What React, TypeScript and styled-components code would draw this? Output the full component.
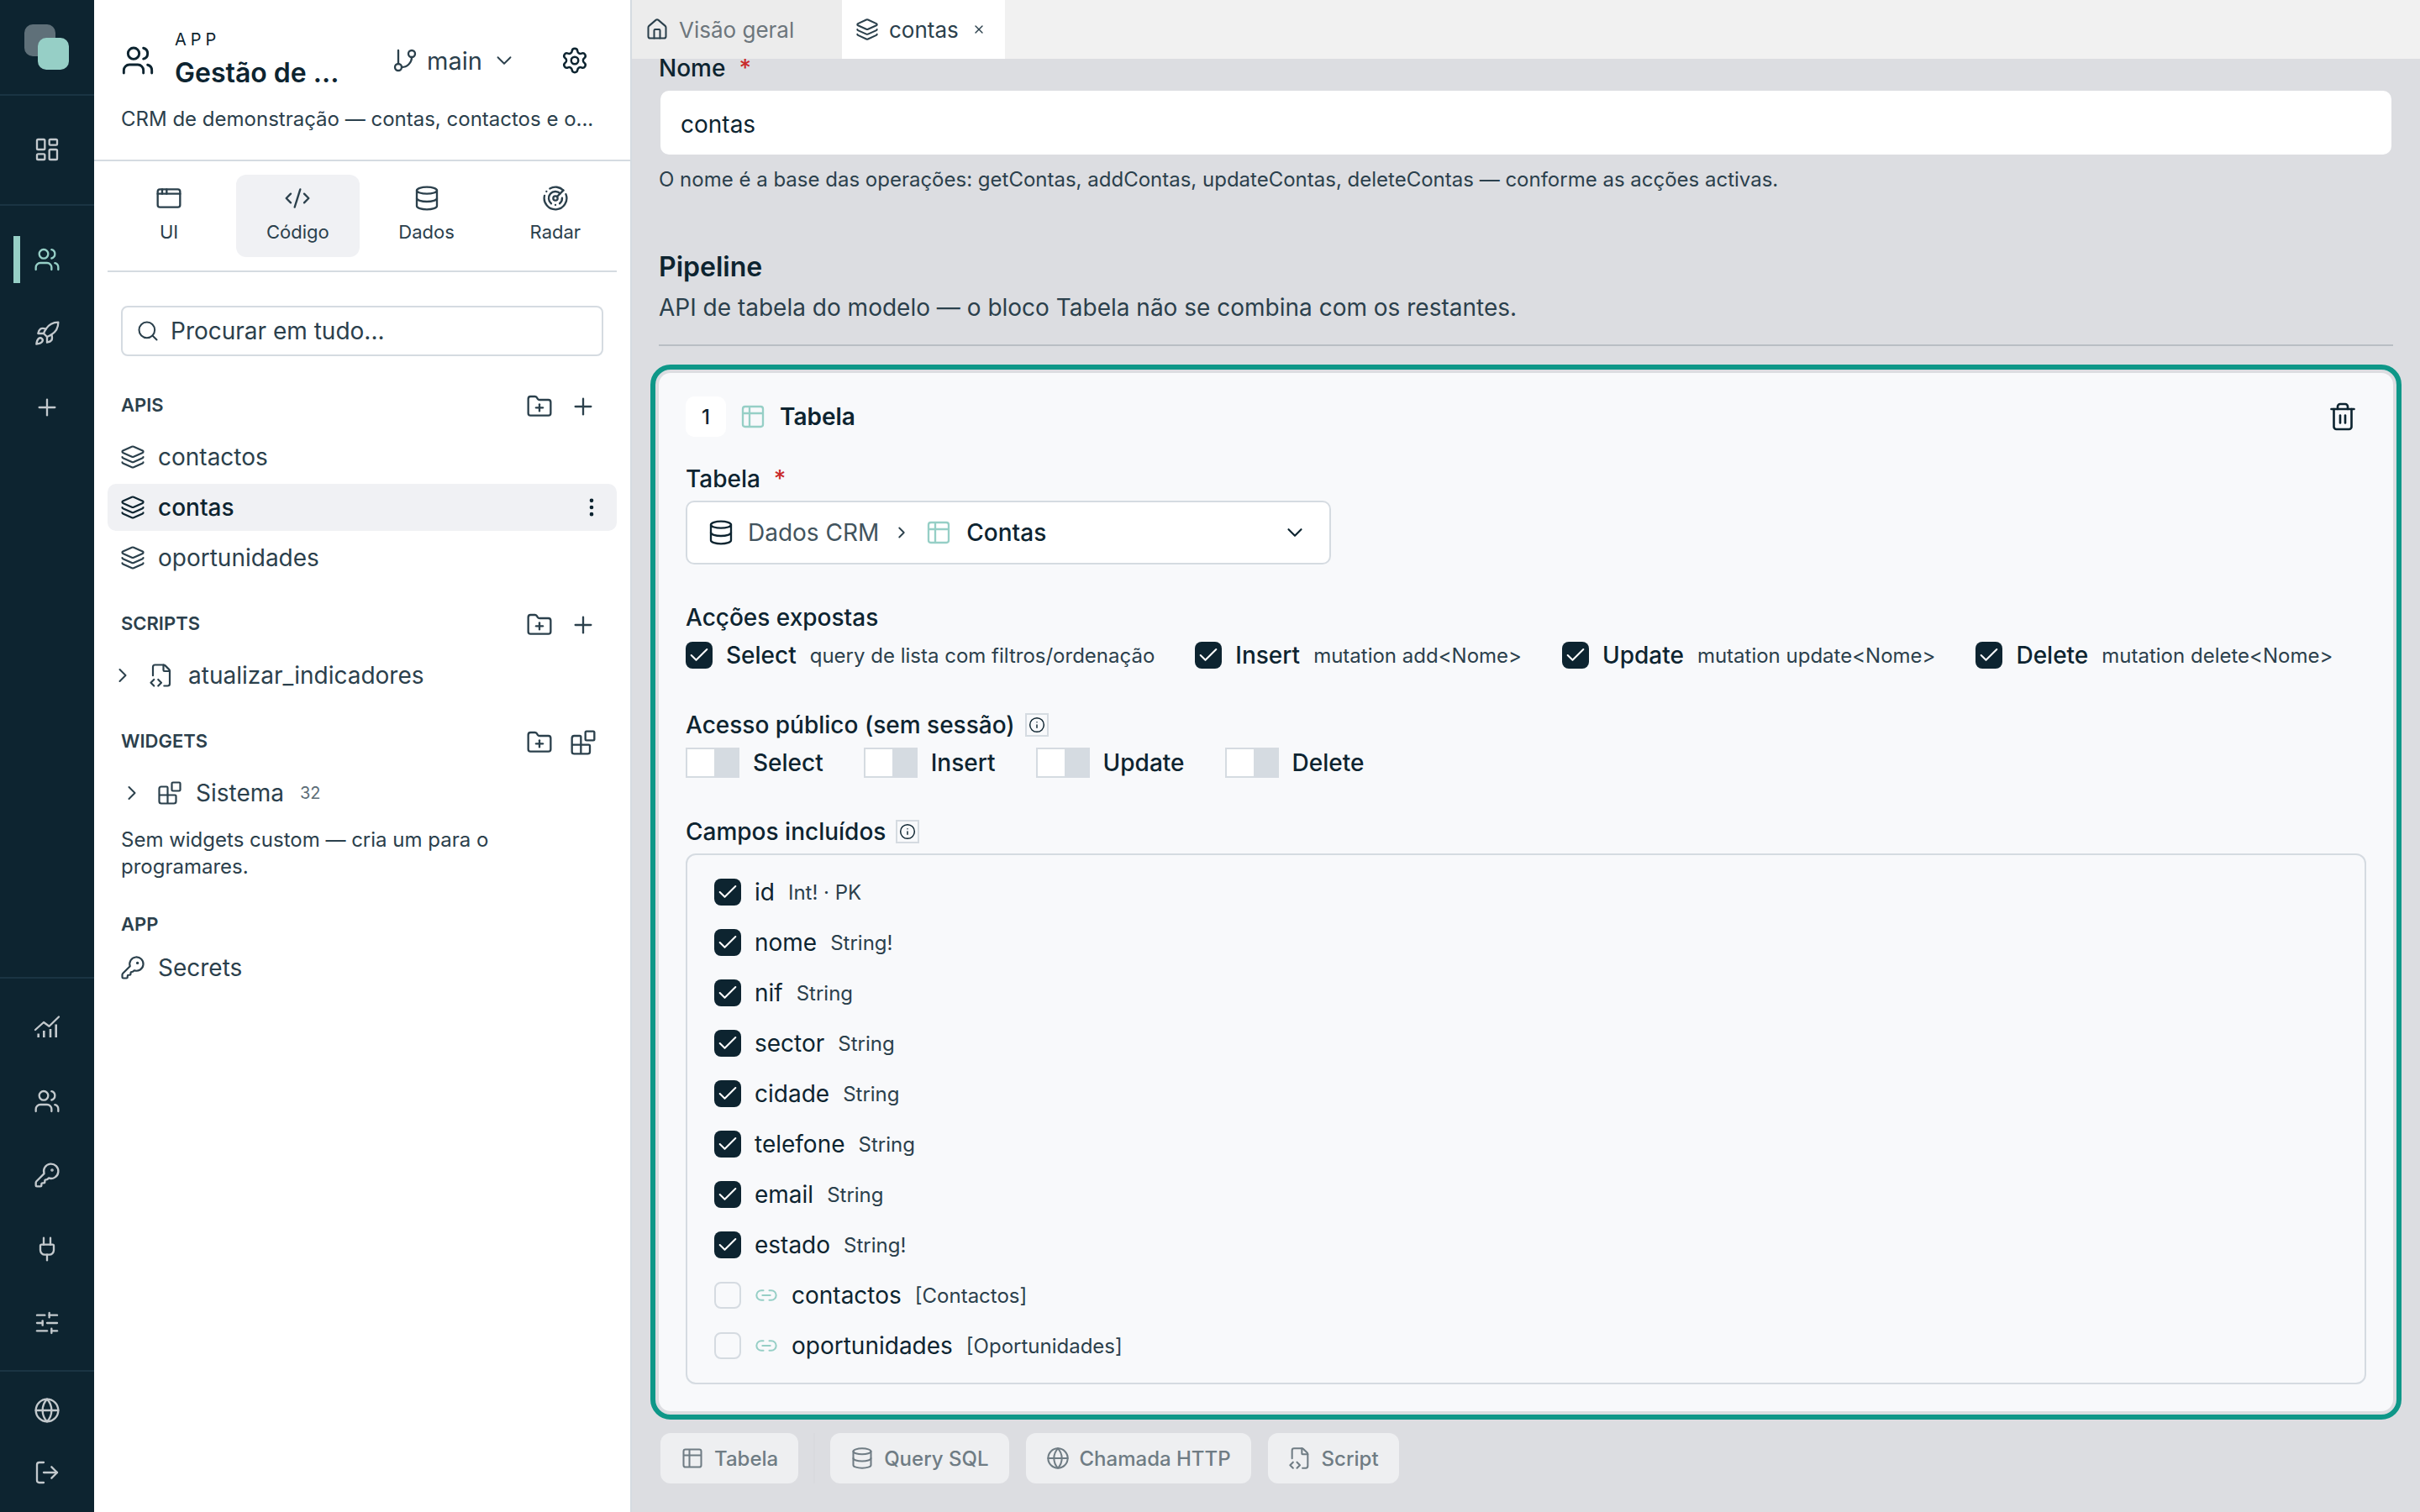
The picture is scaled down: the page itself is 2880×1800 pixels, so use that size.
import { ReactNode } from 'react'
import styled, { createGlobalStyle } from 'styled-components'
import {
  AppWindow,
  Blocks,
  Check,
  ChevronDown,
  ChevronRight,
  CodeXml,
  Database,
  EllipsisVertical,
  FileCodeCorner,
  FolderPlus,
  Globe,
  House,
  Info,
  KeyRound,
  Layers,
  LayoutDashboard,
  Link2,
  LogOut,
  Plug,
  Plus,
  Radar,
  Rocket,
  Search,
  Settings,
  SlidersHorizontal,
  Table2,
  Trash2,
  GitBranch,
  Users,
  X,
} from 'lucide-react'

const INK = '#0d2430'
const BODY = '#2b404c'
const LINE = '#d5dbe1'
const TEAL = '#96cfc6'
const MAIN_BG = '#dcdde1'
const SW = 1.75

const GlobalStyle = createGlobalStyle`
  * { box-sizing: border-box; }
  html, body { margin: 0; padding: 0; height: 100%; }
  body {
    font-family: Inter, "Noto Sans", sans-serif;
    color: ${INK};
    background: ${MAIN_BG};
  }
`

const Shell = styled.div`
  display: flex;
  width: 2880px;
  height: 1800px;
  overflow: hidden;
`

/* rail */
const Rail = styled.nav`
  flex: 0 0 112px;
  display: flex;
  flex-direction: column;
  background: #0d2430;
  color: #c3c9cd;
`
const LogoCell = styled.div`
  height: 114px;
  padding: 29px;
  border-bottom: 2px solid #1a3443;
`
const Logo = styled.div`
  position: relative;
  width: 53px;
  height: 54px;
  border-radius: 10px;
  &::before {
    content: '';
    position: absolute;
    left: 0;
    top: 0;
    width: 37px;
    height: 38px;
    border-radius: 10px;
    background: #5f7079;
  }
  &::after {
    content: '';
    position: absolute;
    right: 0;
    bottom: 0;
    width: 37px;
    height: 38px;
    border-radius: 10px;
    background: ${TEAL};
  }
`
const RailGroup = styled.div<{ $h?: number; $pad?: string; $line?: boolean; $grow?: boolean }>`
  display: flex;
  flex-direction: column;
  ${(p) => (p.$h ? `height: ${p.$h}px;` : '')}
  ${(p) => (p.$grow ? 'flex: 1;' : '')}
  ${(p) => (p.$line ? 'border-bottom: 2px solid #1a3443;' : '')}
  padding: ${(p) => p.$pad ?? '0'};
`
const RailButton = styled.div<{ $active?: boolean; $h?: number }>`
  position: relative;
  flex: 0 0 ${(p) => p.$h ?? 88}px;
  display: flex;
  align-items: center;
  justify-content: center;
  &::before {
    content: '';
    display: ${(p) => (p.$active ? 'block' : 'none')};
    position: absolute;
    left: 16px;
    top: 16px;
    width: 8px;
    height: 56px;
    background: ${TEAL};
  }
`

/* sidebar */
const Sidebar = styled.aside`
  flex: 0 0 640px;
  width: 640px;
  min-width: 0;
  display: flex;
  flex-direction: column;
  background: #fff;
  border-right: 2px solid ${LINE};
`
const AppHead = styled.header`
  height: 192px;
  padding: 30px 32px 0;
  border-bottom: 2px solid ${LINE};
`
const AppTop = styled.div`
  display: flex;
  align-items: center;
  height: 84px;
`
const AppNames = styled.div`
  margin-left: 24px;
  width: 212px;
`
const AppKicker = styled.div`
  font-size: 20px;
  line-height: 24px;
  letter-spacing: 5px;
`
const AppTitle = styled.div`
  margin-top: 5px;
  font-size: 32px;
  line-height: 46px;
  font-weight: 600;
  white-space: nowrap;
`
const BranchButton = styled.div`
  display: flex;
  align-items: center;
  margin-left: 46px;
  font-size: 29px;
  color: ${BODY};
  gap: 10px;
`
const BranchChevron = styled.span`
  display: flex;
  margin-left: 1px;
`
const GearSlot = styled.div`
  margin-left: 52px;
  display: flex;
`
const AppDesc = styled.div`
  margin-top: 12px;
  font-size: 24px;
  line-height: 32px;
  color: ${BODY};
  white-space: nowrap;
`
const ModeTabs = styled.div`
  margin: 16px 16px 0;
  padding-bottom: 16px;
  display: grid;
  grid-template-columns: repeat(4, 1fr);
  column-gap: 7px;
  border-bottom: 2px solid ${LINE};
`
const ModeTab = styled.div<{ $active?: boolean }>`
  height: 98px;
  border-radius: 12px;
  background: ${(p) => (p.$active ? '#f0f1f4' : 'transparent')};
  display: flex;
  flex-direction: column;
  align-items: center;
  padding-top: 12px;
  font-size: 22px;
  line-height: 32px;
  color: ${BODY};
  gap: 8px;
`
const SearchBox = styled.div`
  margin: 40px 32px 0;
  height: 60px;
  border: 2px solid ${LINE};
  border-radius: 8px;
  display: flex;
  align-items: center;
  padding-left: 16px;
  gap: 13px;
  font-size: 28px;
  color: ${BODY};
`
const SectionHead = styled.div<{ $top: number }>`
  margin: ${(p) => p.$top}px 32px 0;
  height: 36px;
  display: flex;
  align-items: center;
  justify-content: space-between;
  font-size: 22px;
  font-weight: 600;
  color: ${BODY};
`
const SectionTools = styled.div`
  display: flex;
  align-items: center;
  gap: 20px;
  margin: 3px 8px 0 0;
`
const TreeRow = styled.div<{ $active?: boolean; $top?: number; $indent?: number; $gap?: number }>`
  margin: ${(p) => p.$top ?? 4}px 16px 0;
  height: 56px;
  padding-left: ${(p) => p.$indent ?? 15}px;
  padding-right: 16px;
  border-radius: 10px;
  background: ${(p) => (p.$active ? '#f0f1f4' : 'transparent')};
  display: flex;
  align-items: center;
  gap: ${(p) => p.$gap ?? 15}px;
  font-size: 28px;
  color: ${(p) => (p.$active ? INK : BODY)};
  font-weight: ${(p) => (p.$active ? 500 : 400)};
`
const Count = styled.span`
  margin-left: 3px;
  font-size: 20px;
  color: #5c6d77;
`
const RowEnd = styled.span`
  margin-left: auto;
  display: flex;
`
const EmptyNote = styled.p`
  margin: 12px 32px 0;
  font-size: 24px;
  line-height: 32px;
  color: ${BODY};
`

/* main */
const Main = styled.main`
  flex: 1;
  min-width: 0;
  display: flex;
  flex-direction: column;
  background: ${MAIN_BG};
`
const TabBar = styled.div`
  flex: 0 0 70px;
  display: flex;
  background: #f1f1f1;
`
const Tab = styled.div<{ $active?: boolean; $w: number }>`
  width: ${(p) => p.$w}px;
  display: flex;
  align-items: center;
  gap: 12px;
  padding-left: 16px;
  font-size: 26px;
  background: ${(p) => (p.$active ? '#fff' : '#ececec')};
  color: ${(p) => (p.$active ? BODY : '#6d767c')};
`
const TabIcon = styled.span`
  display: flex;
  color: ${BODY};
`
const TabClose = styled.span`
  display: flex;
  margin-left: 4px;
  color: ${BODY};
`
const Scroller = styled.div`
  flex: 1;
  min-height: 0;
  overflow: hidden;
  padding: 0 32px;
`
const Content = styled.div`
  margin-top: -7px;
`
const FieldLabel = styled.div<{ $top?: number }>`
  margin-top: ${(p) => p.$top ?? 0}px;
  display: flex;
  align-items: center;
  gap: 12px;
  font-size: 28px;
  line-height: 36px;
  font-weight: 500;
  color: ${INK};
`
const Required = styled.span`
  color: #c92a2a;
  margin-left: 4px;
`
const NameInput = styled.div`
  margin: 9px 2px 0;
  height: 76px;
  background: #fff;
  border-radius: 10px;
  display: flex;
  align-items: center;
  padding: 3px 0 0 24px;
  font-size: 28px;
`
const Hint = styled.div`
  margin-top: 12px;
  font-size: 24px;
  line-height: 36px;
  color: ${BODY};
`
const PipelineTitle = styled.h2`
  margin: 64px 0 0;
  font-size: 32px;
  line-height: 44px;
  font-weight: 600;
`
const PipelineSub = styled.div`
  margin-top: 8px;
  font-size: 28px;
  line-height: 36px;
  color: ${BODY};
`
const Divider = styled.hr`
  margin: 26px 0 0;
  border: 0;
  height: 2px;
  background: #b9bec4;
`
const StepCard = styled.section`
  margin-top: 32px;
  height: 1236px;
  padding: 28px 32px 0;
  background: #f8f9fb;
  border-radius: 14px;
  outline: 6px solid #0e9788;
  outline-offset: 4px;
`
const StepHead = styled.div`
  display: flex;
  align-items: center;
`
const StepNumber = styled.div`
  width: 48px;
  height: 48px;
  border-radius: 10px;
  background: #fff;
  display: flex;
  align-items: center;
  justify-content: center;
  font-size: 24px;
  font-weight: 500;
`
const StepIcon = styled.span`
  display: flex;
  margin-left: 16px;
  color: ${TEAL};
`
const StepTitle = styled.div`
  margin-left: 16px;
  font-size: 28px;
  font-weight: 600;
`
const TrashSlot = styled.div`
  margin-left: auto;
  margin-right: 10px;
  display: flex;
`
const TableSelect = styled.div`
  margin-top: 8px;
  width: 768px;
  height: 76px;
  background: #fff;
  border: 2px solid ${LINE};
  border-radius: 10px;
  display: flex;
  align-items: center;
  padding: 0 26px 0 24px;
  font-size: 28px;
`
const SelectMuted = styled.span`
  margin-left: 16px;
  color: #42545e;
`
const SelectStrong = styled.span`
  margin-left: 17px;
  font-weight: 500;
`
const Crumb = styled.span`
  display: flex;
  margin: 0 17px 0 16px;
  color: #2b404c;
`
const SelectChevron = styled.span`
  display: flex;
  margin-left: auto;
`
const IconTeal = styled.span`
  display: flex;
  color: ${TEAL};
`
const OptionRow = styled.div`
  margin-top: 10px;
  display: flex;
  align-items: center;
  gap: 48px;
`
const ToggleRow = styled(OptionRow)`
  margin-top: 9px;
`
const CheckOption = styled.div`
  display: flex;
  align-items: center;
`
const Box = styled.span<{ $on?: boolean }>`
  flex: 0 0 32px;
  width: 32px;
  height: 32px;
  border-radius: 8px;
  display: flex;
  align-items: center;
  justify-content: center;
  color: #fff;
  background: ${(p) => (p.$on ? INK : 'transparent')};
  border: ${(p) => (p.$on ? '0' : `2px solid ${LINE}`)};
`
const OptionName = styled.span`
  margin-left: 16px;
  font-size: 28px;
  font-weight: 500;
`
const OptionHint = styled.span`
  margin-left: 16px;
  font-size: 24px;
  color: ${BODY};
`
const InfoBox = styled.span`
  width: 28px;
  height: 28px;
  border: 2px solid ${LINE};
  display: flex;
  align-items: center;
  justify-content: center;
  color: ${INK};
`
const ToggleOption = styled.div`
  display: flex;
  align-items: center;
`
const ToggleTrack = styled.span`
  width: 64px;
  height: 36px;
  padding: 2px;
  background: ${LINE};
  display: flex;
  &::before {
    content: '';
    width: 32px;
    height: 32px;
    background: #fff;
  }
`
const FieldBox = styled.div`
  margin-top: 8px;
  width: 2000px;
  height: 632px;
  border: 2px solid ${LINE};
  border-radius: 12px;
  padding: 14px 32px 0;
`
const FieldRow = styled.div`
  height: 60px;
  display: flex;
  align-items: center;
`
const FieldName = styled.span`
  margin-left: 16px;
  font-size: 28px;
`
const FieldType = styled.span`
  margin-left: 16px;
  font-size: 24px;
  color: ${BODY};
`
const LinkSlot = styled.span`
  margin-left: 16px;
  display: flex;
  color: ${TEAL};
`
const AddBar = styled.div`
  margin: 26px 0 0 2px;
  display: flex;
  align-items: center;
  gap: 20px;
`
const AddButton = styled.div`
  height: 60px;
  padding: 0 24px;
  border-radius: 12px;
  background: #eeeff1;
  display: flex;
  align-items: center;
  gap: 12px;
  font-size: 24px;
  font-weight: 500;
  color: #6f7c84;
`
const AddSeparator = styled.span`
  width: 2px;
  height: 60px;
  margin: 0 -2px;
  background: #d9dade;
`

const railTop = [LayoutDashboard]
const railBottom = [Users, KeyRound, Plug, SlidersHorizontal]

const SideIcon = ({ children }: { children: ReactNode }) => (
  <RailButton>{children}</RailButton>
)

const ChartIcon = () => (
  <svg width="32" height="32" viewBox="0 0 32 32" fill="none" stroke="currentColor" strokeWidth="2.3" strokeLinecap="round" strokeLinejoin="round">
    <path d="M2 19l10-9 6.5 4.7L30 3.5" />
    <path d="M5.7 28v-4.5M12.3 28v-8M20 28v-10M26.7 28V12.5" strokeWidth="2.6" strokeLinecap="butt" />
  </svg>
)

const fields = [
  ['id', 'Int! · PK'],
  ['nome', 'String!'],
  ['nif', 'String'],
  ['sector', 'String'],
  ['cidade', 'String'],
  ['telefone', 'String'],
  ['email', 'String'],
  ['estado', 'String!'],
]
const relations = [
  ['contactos', '[Contactos]'],
  ['oportunidades', '[Oportunidades]'],
]
const actions = [
  ['Select', 'query de lista com filtros/ordenação'],
  ['Insert', 'mutation add<Nome>'],
  ['Update', 'mutation update<Nome>'],
  ['Delete', 'mutation delete<Nome>'],
]

const CheckMark = () => <Check size={28} strokeWidth={SW} />

const App = () => (
  <>
    <GlobalStyle />
    <Shell>
      <Rail>
        <LogoCell>
          <Logo />
        </LogoCell>
        <RailGroup $h={131} $line $pad="20px 0 0">
          {railTop.map((Icon, i) => (
            <SideIcon key={i}>
              <Icon size={32} strokeWidth={SW} />
            </SideIcon>
          ))}
        </RailGroup>
        <RailGroup $grow $line $pad="20px 0 0">
          <RailButton $active>
            <Users size={32} strokeWidth={SW} color={TEAL} />
          </RailButton>
          <RailButton>
            <Rocket size={32} strokeWidth={SW} />
          </RailButton>
          <RailButton>
            <Plus size={32} strokeWidth={SW} />
          </RailButton>
        </RailGroup>
        <RailGroup $h={468} $line $pad="14px 0 0">
          <RailButton>
            <ChartIcon />
          </RailButton>
          {railBottom.map((Icon, i) => (
            <SideIcon key={i}>
              <Icon size={32} strokeWidth={SW} />
            </SideIcon>
          ))}
        </RailGroup>
        <RailGroup $pad="8px 0 0" $h={167}>
          <RailButton $h={76}>
            <Globe size={32} strokeWidth={SW} />
          </RailButton>
          <RailButton $h={72}>
            <LogOut size={32} strokeWidth={SW} />
          </RailButton>
        </RailGroup>
      </Rail>

      <Sidebar>
        <AppHead>
          <AppTop>
            <Users size={40} strokeWidth={SW} />
            <AppNames>
              <AppKicker>APP</AppKicker>
              <AppTitle>Gestão de ...</AppTitle>
            </AppNames>
            <BranchButton>
              <GitBranch size={32} strokeWidth={SW} />
              main
              <BranchChevron>
                <ChevronDown size={30} strokeWidth={1.5} />
              </BranchChevron>
            </BranchButton>
            <GearSlot>
              <Settings size={34} strokeWidth={SW} />
            </GearSlot>
          </AppTop>
          <AppDesc>CRM de demonstração — contas, contactos e o...</AppDesc>
        </AppHead>

        <ModeTabs>
          <ModeTab>
            <AppWindow size={32} strokeWidth={SW} />
            UI
          </ModeTab>
          <ModeTab $active>
            <CodeXml size={32} strokeWidth={SW} />
            Código
          </ModeTab>
          <ModeTab>
            <Database size={32} strokeWidth={SW} />
            Dados
          </ModeTab>
          <ModeTab>
            <Radar size={32} strokeWidth={SW} />
            Radar
          </ModeTab>
        </ModeTabs>

        <SearchBox>
          <Search size={28} strokeWidth={SW} />
          Procurar em tudo...
        </SearchBox>

        <SectionHead $top={40}>
          APIS
          <SectionTools>
            <FolderPlus size={32} strokeWidth={SW} />
            <Plus size={32} strokeWidth={SW} />
          </SectionTools>
        </SectionHead>
        <TreeRow $top={16}>
          <Layers size={30} strokeWidth={SW} />
          contactos
        </TreeRow>
        <TreeRow $active>
          <Layers size={30} strokeWidth={SW} />
          contas
          <RowEnd>
            <EllipsisVertical size={28} strokeWidth={2} />
          </RowEnd>
        </TreeRow>
        <TreeRow>
          <Layers size={30} strokeWidth={SW} />
          oportunidades
        </TreeRow>

        <SectionHead $top={32}>
          SCRIPTS
          <SectionTools>
            <FolderPlus size={32} strokeWidth={SW} />
            <Plus size={32} strokeWidth={SW} />
          </SectionTools>
        </SectionHead>
        <TreeRow $top={16} $indent={4} $gap={17}>
          <ChevronRight size={28} strokeWidth={SW} />
          <FileCodeCorner size={30} strokeWidth={SW} />
          atualizar_indicadores
        </TreeRow>

        <SectionHead $top={32}>
          WIDGETS
          <SectionTools>
            <FolderPlus size={32} strokeWidth={SW} />
            <Blocks size={32} strokeWidth={SW} />
          </SectionTools>
        </SectionHead>
        <TreeRow $top={16} $gap={16}>
          <ChevronRight size={28} strokeWidth={SW} />
          <Blocks size={30} strokeWidth={SW} />
          Sistema
          <Count>32</Count>
        </TreeRow>
        <EmptyNote>Sem widgets custom — cria um para o programares.</EmptyNote>

        <SectionHead $top={34}>APP</SectionHead>
        <TreeRow $top={6}>
          <KeyRound size={30} strokeWidth={SW} />
          Secrets
        </TreeRow>
      </Sidebar>

      <Main>
        <TabBar>
          <Tab $w={250}>
            <TabIcon>
              <House size={28} strokeWidth={SW} />
            </TabIcon>
            Visão geral
          </Tab>
          <Tab $active $w={194}>
            <TabIcon>
              <Layers size={28} strokeWidth={SW} />
            </TabIcon>
            contas
            <TabClose>
              <X size={16} strokeWidth={2} />
            </TabClose>
          </Tab>
        </TabBar>
        <Scroller>
          <Content>
            <FieldLabel>
              Nome <Required>*</Required>
            </FieldLabel>
            <NameInput>contas</NameInput>
            <Hint>
              O nome é a base das operações: getContas, addContas, updateContas, deleteContas — conforme as acções
              activas.
            </Hint>
            <PipelineTitle>Pipeline</PipelineTitle>
            <PipelineSub>API de tabela do modelo — o bloco Tabela não se combina com os restantes.</PipelineSub>
            <Divider />
            <StepCard>
              <StepHead>
                <StepNumber>1</StepNumber>
                <StepIcon>
                  <Table2 size={32} strokeWidth={SW} />
                </StepIcon>
                <StepTitle>Tabela</StepTitle>
                <TrashSlot>
                  <Trash2 size={36} strokeWidth={SW} />
                </TrashSlot>
              </StepHead>

              <FieldLabel $top={32}>
                Tabela <Required>*</Required>
              </FieldLabel>
              <TableSelect>
                <Database size={32} strokeWidth={SW} />
                <SelectMuted>Dados CRM</SelectMuted>
                <Crumb>
                  <ChevronRight size={22} strokeWidth={2} />
                </Crumb>
                <IconTeal>
                  <Table2 size={32} strokeWidth={SW} />
                </IconTeal>
                <SelectStrong>Contas</SelectStrong>
                <SelectChevron>
                  <ChevronDown size={30} strokeWidth={SW} />
                </SelectChevron>
              </TableSelect>

              <FieldLabel $top={45}>Acções expostas</FieldLabel>
              <OptionRow>
                {actions.map(([name, hint]) => (
                  <CheckOption key={name}>
                    <Box $on>
                      <CheckMark />
                    </Box>
                    <OptionName>{name}</OptionName>
                    <OptionHint>{hint}</OptionHint>
                  </CheckOption>
                ))}
              </OptionRow>

              <FieldLabel $top={48}>
                Acesso público (sem sessão)
                <InfoBox>
                  <Info size={20} strokeWidth={SW} />
                </InfoBox>
              </FieldLabel>
              <ToggleRow>
                {actions.map(([name]) => (
                  <ToggleOption key={name}>
                    <ToggleTrack />
                    <OptionName>{name}</OptionName>
                  </ToggleOption>
                ))}
              </ToggleRow>

              <FieldLabel $top={46}>
                Campos incluídos
                <InfoBox>
                  <Info size={20} strokeWidth={SW} />
                </InfoBox>
              </FieldLabel>
              <FieldBox>
                {fields.map(([name, type]) => (
                  <FieldRow key={name}>
                    <Box $on>
                      <CheckMark />
                    </Box>
                    <FieldName>{name}</FieldName>
                    <FieldType>{type}</FieldType>
                  </FieldRow>
                ))}
                {relations.map(([name, type]) => (
                  <FieldRow key={name}>
                    <Box />
                    <LinkSlot>
                      <Link2 size={28} strokeWidth={SW} />
                    </LinkSlot>
                    <FieldName>{name}</FieldName>
                    <FieldType>{type}</FieldType>
                  </FieldRow>
                ))}
              </FieldBox>
            </StepCard>
            <AddBar>
              <AddButton>
                <Table2 size={28} strokeWidth={SW} />
                Tabela
              </AddButton>
              <AddSeparator />
              <AddButton>
                <Database size={28} strokeWidth={SW} />
                Query SQL
              </AddButton>
              <AddButton>
                <Globe size={28} strokeWidth={SW} />
                Chamada HTTP
              </AddButton>
              <AddButton>
                <FileCodeCorner size={28} strokeWidth={SW} />
                Script
              </AddButton>
            </AddBar>
          </Content>
        </Scroller>
      </Main>
    </Shell>
  </>
)

export default App
